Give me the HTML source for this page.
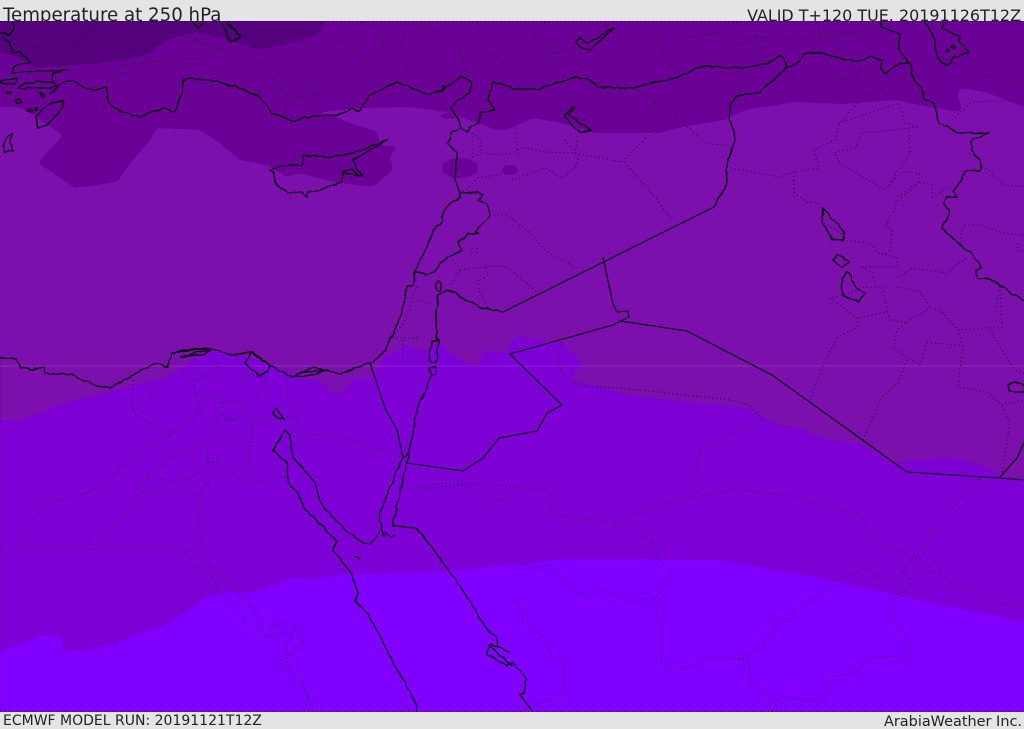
<!DOCTYPE html>
<html><head><meta charset="utf-8"><style>
html,body{margin:0;padding:0;background:#e4e4e4;width:1024px;height:729px;overflow:hidden}
svg{display:block}
text{font-family:"DejaVu Sans","Liberation Sans",sans-serif;fill:#222}
.c{fill:none;stroke:#000;stroke-width:1.25;stroke-linejoin:round}
.s{fill:none;stroke:#000;stroke-width:1.1;stroke-linejoin:round}
.d{fill:none;stroke:#000;stroke-width:1;stroke-dasharray:1 3;opacity:.75}
</style></head><body>
<svg width="1024" height="729" viewBox="0 0 1024 729" xmlns="http://www.w3.org/2000/svg">
<defs>
<clipPath id="m"><rect x="0" y="21" width="1024" height="691"/></clipPath>
<filter id="sm" filterUnits="userSpaceOnUse" x="-40" y="-40" width="1104" height="809" color-interpolation-filters="sRGB">
<feGaussianBlur stdDeviation="2.5"/>
<feComponentTransfer><feFuncA type="linear" slope="30" intercept="-14.5"/></feComponentTransfer>
</filter>
<filter id="rg" filterUnits="userSpaceOnUse" x="0" y="0" width="1024" height="729" color-interpolation-filters="sRGB">
<feTurbulence type="fractalNoise" baseFrequency="0.13" numOctaves="2" seed="4" result="n"/>
<feDisplacementMap in="SourceGraphic" in2="n" scale="3.5" xChannelSelector="R" yChannelSelector="G"/>
</filter>
</defs>
<rect width="1024" height="729" fill="#e4e4e4"/>
<text x="3" y="21" font-size="18.2">Temperature at 250 hPa</text>
<text x="1021" y="21" font-size="15.95" text-anchor="end">VALID T+120 TUE. 20191126T12Z</text>
<text x="3" y="725" font-size="14">ECMWF MODEL RUN: 20191121T12Z</text>
<text x="1022" y="726" font-size="14.45" text-anchor="end">ArabiaWeather Inc.</text>

<!-- fill bands -->
<rect x="0" y="21" width="1024" height="691" fill="#7f00ff"/>
<g clip-path="url(#m)">
<path filter="url(#sm)" fill="#7d00d5" d="M-30 -20H1054V628L1024 622 899 596 835 581 722 560 630 559 562 559 512 565 447 571 340 575 313 579 293 578 250 593 223 592 205 599 167 624 107 646 73 652 63 649 62 636 43 635 0 652-30 664Z"/>
<path filter="url(#sm)" fill="#7b10ad" d="M-30 -20H1054V479L1002 477 983 465 950 457 893 463 877 453 860 443 827 440 797 427 780 425 763 417 750 408 720 405 640 397 580 383 570 378 580 368 582 362 563 343 520 337 512 340 508 352 481 352 480 366 470 365 448 352 440 340 423 352 407 345 383 358 373 378 353 379 343 392 333 395 323 383 290 373 273 365 240 355 217 350 197 358 167 377 117 390 57 405 33 416 17 420-30 420Z"/>
<path filter="url(#sm)" fill="#6a0096" d="M-30 -20H1054V120L1024 107 985 92 960 88 957 95 962 107 960 112 929 107 895 100 845 104 795 102 745 110 725 120 682 127 659 133 595 133 562 123 532 118 512 128 500 131 477 123 456 115 447 112 410 107 360 108 330 111 302 113 335 116 347 122 378 132 380 145 400 147 390 155 393 170 373 187 333 182 300 173 287 177 267 165 240 160 220 143 200 130 157 128 150 140 133 160 117 182 75 188 38 163 47 153 63 135 30 113 20 107-30 107Z"/>
<path filter="url(#sm)" fill="#55007c" d="M-30 -20H330L325 21 320 33 293 43 260 50 217 37 197 32 167 40 150 53 133 58 100 63 33 68 20 58 0 52-30 46Z"/>
<ellipse cx="460" cy="168" rx="18" ry="10" fill="#6a0096"/>
<ellipse cx="510" cy="170" rx="8" ry="5" fill="#6a0096"/>
<ellipse cx="449" cy="116" rx="8" ry="3" fill="#6a0096"/>
</g>
<rect x="0" y="365.5" width="1024" height="1" fill="#fff" opacity=".13"/>

<!-- dotted borders -->
<g class="d">
<path d="M0 360V712M0 21.5H1024M0 711.5H1024"/>
<path d="M20 43L33 48 57 48 83 43 93 33 92 22M83 43L100 65 110 75 123 75 123 65 153 62 200 58 223 50 190 37 173 32 140 32 132 50 123 65M223 50L260 63 280 87 285 97 288 120M280 87L297 62 340 38 353 47 365 62 347 70 317 77 307 88 317 95 285 100M365 62L400 50 403 37 423 30 440 33 420 22M380 30L360 22M382 33L383 53M400 50L413 80M478 22L477 37 460 53 467 73M473 52L497 57 512 53"/>
<path d="M472 133L473 157 482 152 480 140 472 133M482 152L497 155 512 153 522 147 545 152 575 153 622 162 649 135 655 100 637 90M477 178L512 173M467 190L477 178M512 180L545 168 562 178 575 168 579 155M545 22L534 37 539 43 565 50M512 60L559 52 555 67 564 78M652 27L659 33 662 50 675 73M669 50L685 38 719 33 725 25 739 22M719 33L739 45 755 37 819 40 819 23M820 35L875 32 882 23M755 37L754 53 770 62M839 37L840 57M885 87L859 70 879 60M785 68L795 80 810 87 835 76 855 80 859 70M885 87L859 102 839 123 835 140 814 150 819 168 794 172 794 197M727 167L779 177 794 172M839 123L899 103 905 123 919 127 862 133 855 148 834 153 840 163 885 190 910 153 909 130M892 182L902 172 919 173 920 182 932 185 932 200M920 182L899 200M952 120L972 102 1019 100M939 57L989 77 1005 70 1015 82 1024 87M980 163L1005 185 1024 187M655 103L689 128 705 143 729 146M625 162L637 177 655 197 672 220M595 90L598 103 572 110M515 133L519 157M565 140L575 153 579 127"/>
<path d="M490 215L507 215 527 230 547 252 577 268M453 260L460 270 450 287M460 270L493 266 507 267 537 292M480 280L488 275 485 263M478 280L480 293 488 308M472 248L472 253M477 248L477 253M417 287L412 297 410 310 403 323 393 338 420 338M418 300L433 305M403 340L403 360 430 360"/>
<path d="M562 342L557 363 567 378 575 385 640 390 730 400 750 405 763 420 700 450 693 488M410 490L480 484 550 490 552 515 610 523 680 500 735 489 790 495 860 515 870 532 877 542 909 554 909 559 920 559 934 572 972 592 1002 604 1024 606M934 529L919 551 902 572M980 478L950 510 934 529M610 523L634 529 655 544 659 559 672 574 662 589 655 599 657 616 662 622 662 666 669 671 699 664 709 656 739 659 764 646 764 637 775 637 775 624 789 619 799 606 829 589 835 581 865 567 879 579 895 579 904 572 914 581 890 604 890 617 905 636 909 656 872 657 855 672 832 677 824 701 782 697 772 711 769 702 764 692 750 682 749 661 739 659"/>
<path d="M512 566L522 564 539 569 552 564 565 581 580 594 602 591 625 601 657 599M512 601L525 606 522 622 542 636 555 661 564 662 564 696 532 705"/>
<path d="M793 180L795 193 808 203 817 202 823 213M824 223L843 235M843 240L870 243 878 253 897 257 897 267 862 267 872 273 875 285 883 288 887 312 857 318 830 298 843 295 865 287 878 288M857 318L858 327 838 337 825 360 810 400M887 312L890 320 907 322 897 330 893 348 920 365 927 343 963 345 960 370 958 387 987 392 1002 405 1010 423 1002 473M907 322L930 308 940 310 958 330 963 347M958 330L1002 327 1000 287 995 313M990 330L1010 363 1017 372 1024 373M907 360L898 383 882 397 863 440M1002 405L1024 400M897 277L913 268 947 273 967 257M897 287L920 292 930 307M960 243L963 225 980 225 1003 233 1024 235M897 200L893 213 886 225 892 230 890 250 882 257M918 182L897 197M932 197L950 187M1018 243L1017 250 1024 252"/>
<path d="M133 380V410L137 415 170 435 200 412 195 393 193 380 180 367M170 435L133 457 90 492 43 503 28 528 17 549M133 410L153 397 147 385M195 380L217 372 218 358M195 393L217 400 230 387 247 375 267 378 258 398 243 402 220 402 222 415 233 420 248 412 243 402M198 412L212 420 233 420M250 418L273 418M287 417H297M287 378L288 400 298 417 298 433M217 423L220 442H252V418M250 442V480M220 470L250 483 288 476M290 438L307 434 340 438 400 457M208 462L207 445 193 445 147 475 173 482 200 473 208 462 217 463 217 470 200 495 200 510 197 530M147 475L142 493H200M142 493L135 507 113 528M402 487L420 488 443 483 467 485 485 503 512 498"/>
<path d="M0 549H187L200 552 203 542 198 529M187 551L193 566 213 579 222 594 250 624 267 636 293 632 287 644 280 662 290 679 307 692 313 711M202 562L227 579 248 604 270 627 290 622 303 632 302 646 288 656 288 669 302 679 308 702 302 711M110 531L93 536 85 547"/>
</g>

<!-- straight borders -->
<g class="s">
<path d="M714 207L503 312M603 257L613 304 617 312 628 311 629 317 613 325 510 354 562 405 547 413 537 431 499 438 483 458 463 471 407 463M620 321L687 331 772 375 907 472 1000 478 1024 480M1000 477L1017 458 1024 443"/>
<path d="M370 363L385 408 397 430 403 457"/>
</g>

<!-- coasts -->
<g class="c" filter="url(#rg)">
<path d="M12 22L14 28 8 36 0 33M2 37L10 42 12 53 20 52 23 56 31 62 18 65 13 68 13 73 22 72 68 70 53 73 52 80 55 83 57 85 50 88 35 88 18 88 20 85 33 83 38 81 53 83M55 92L50 93 63 82 73 80 83 87 97 90 107 88 108 103 120 112 132 115 140 117 163 108 175 112 182 93 183 80 188 78 217 81 257 95 273 113 295 122 303 117 337 115 353 108 357 112 362 107 370 95 397 82 405 85 428 95 443 90 442 86 446 88 438 92 443 90 462 76 472 83 470 92 455 103 450 108 458 118 460 127 452 132 448 143 457 153 455 180 460 193 460 198 450 203 443 212 442 222 434 230 423 255 415 272 413 285 407 286 402 313 390 340 382 355 370 363 340 373 330 372 313 367 293 377 287 375 270 365 252 352 232 355 210 348 172 353 167 367 157 362 110 388 100 387 72 375 45 373 43 367 33 370 20 367 17 359 0 358"/>
<path d="M0 82L17 78 15 84 2 84ZM40 92L45 97 42 98ZM7 92H11V94H7ZM15 100L20 99 22 103 17 103ZM27 110H32V112H27ZM35 107H37V110H35Z"/>
<path d="M63 100L63 107 55 117 47 125 38 128 36 117 47 105ZM12 133L10 143 13 151 5 152 4 143 7 137ZM193 22L198 28 203 22M222 23L230 42 241 37 227 23"/>
<path d="M172 353L190 349 210 348M180 357L203 351 210 350 205 354ZM245 363L252 352 258 358 270 365 268 371 260 376 252 370ZM293 377L302 372 328 370 315 374 305 376Z"/>
<path d="M270 170L282 166 302 165 304 155 328 157 353 153 388 140 353 160 356 168 363 176 343 173 342 182 317 191 308 192 307 197 302 192 288 193 275 183 273 172Z"/>
<path d="M342 172L352 169 360 176"/>
<path d="M460 127L468 132 470 127 479 123 480 112 495 110 488 100 493 81 512 88 537 89 575 77 589 80 599 87 625 89 675 78 702 66 739 68 769 63 779 56 784 58 787 67 797 64 805 53 822 53 845 60 860 61 870 56 882 60 880 68 885 73 900 63 910 63 914 80 922 88 924 100 934 103 939 123 959 133 989 133 972 140 972 150 980 162 980 170 965 172 957 188 953 190 957 197 947 197 943 203 950 212 942 228 960 245 970 252 982 267 975 272 978 278 990 279 1024 301"/>
<path d="M787 67L759 93 737 96 730 107 729 118 735 132 735 142 727 163 727 185 714 207M503 312L482 308 472 302 465 301 457 293 448 290 438 295"/>
<path d="M909 63L899 50 900 35 882 27 880 22M925 22L934 37 937 58 947 66 954 57 969 53 959 40 960 37 942 28 945 22"/>
<circle cx="948" cy="51" r="1.5"/><circle cx="953" cy="47" r="1.5"/>
<path d="M576 42L580 47 590 50 614 28 609 30 597 38 587 43 580 38ZM572 107L564 117 580 132 592 130 582 125 569 115 574 108Z"/>
<path d="M460 193L477 192 483 195 478 200 488 205 490 215 475 232 479 233 467 234 458 243 462 250 440 263 435 272 427 274 415 272"/>
<ellipse cx="439" cy="286" rx="3" ry="5"/>
<path d="M438 295L436 320 437 340M433 341L439 340 437 357 436 363 430 362 429 353ZM429 368L436 367 436 374 431 375ZM432 375L417 410 407 463"/>
<path d="M403 457L380 513 382 530 385 537M409 453L403 480 392 526 410 527 418 529 433 549 450 572 467 597 488 631 497 637 497 646 510 652 490 644 487 654 507 666 512 662 525 676 525 692 520 694 529 706 532 711"/>
<path d="M383 532L390 537 396 535M403 457L409 453"/>
<path d="M285 430L283 433 273 450 287 463 288 483 298 493 303 507 325 529 337 541 333 551 350 571 358 592 355 601 367 612 390 656 417 706V711M285 430L290 437 293 458 315 482 320 503 345 530 363 543 370 544 380 532"/>
<path d="M272 412L277 408 285 420 277 417ZM354 557L360 559M488 645L505 660 512 666"/>
<path d="M823 208L822 223 832 239 843 240 845 232 836 222 827 213ZM838 255L833 260 842 267 849 262 845 259ZM846 272L841 285 843 295 858 302 865 293 856 288 850 275ZM1008 385L1016 382 1024 385V392L1010 392Z"/>
</g>
</svg>
</body></html>
